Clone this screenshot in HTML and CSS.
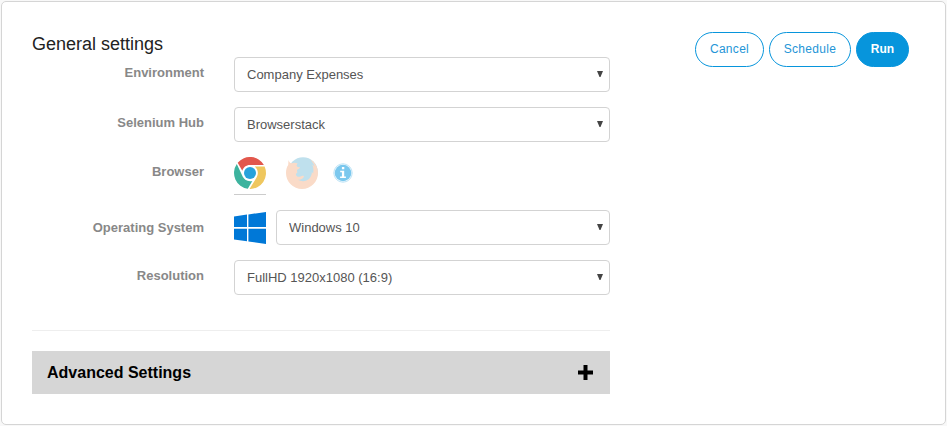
FILE: index.html
```html
<!DOCTYPE html>
<html lang="en">
<head>
<meta charset="utf-8">
<title>General settings</title>
<link rel="stylesheet" href="styles.css">
</head>
<body>
<main class="card">
  <section class="settings">
    <h1 class="title">General settings</h1>
    <div class="form">
      <div class="row">
        <label class="label" for="env">Environment</label>
        <div class="select"><select id="env"><option>Company Expenses</option></select><svg class="arrow" viewBox="0 0 6 6"><path d="M0 0h6L3.500 6h-1z"/></svg></div>
      </div>
      <div class="row">
        <label class="label" for="hub">Selenium Hub</label>
        <div class="select"><select id="hub"><option>Browserstack</option></select><svg class="arrow" viewBox="0 0 6 6"><path d="M0 0h6L3.500 6h-1z"/></svg></div>
      </div>
      <div class="row browser-row">
        <span class="label">Browser</span>
        <div class="browsers">
          <span class="browser selected">
            <svg width="32" height="32" viewBox="0 0 32 32">
              <circle cx="16" cy="16" r="16" fill="#fff"/>
              <path d="M3.700 5.800A16 16 0 0 1 29.900 8H16c-4 0-6.700 2.400-7.700 5.700z" fill="#e2574c"/>
              <path d="M2.800 7A16 16 0 0 0 13.800 31.850L18.300 24C13.600 25 9.800 22.600 8.200 18.500z" fill="#3db39e"/>
              <path d="M30.600 9.500A16 16 0 0 1 15.500 32L22.700 20.300C24.800 16.700 24 12.500 20.800 9.500z" fill="#efc75e"/>
              <circle cx="16" cy="16" r="6" fill="#27a2db"/>
            </svg>
          </span>
          <span class="browser firefox">
            <svg width="32" height="32" viewBox="0 0 32 32">
              <circle cx="17" cy="15" r="14.800" fill="#bfe0ed"/>
              <path d="M2.500 3C3 5 4 6 5.500 6.300c2-.8 4-.8 6 0L10.500 8.500c.5 1.500 2 1.600 3.700 1.800-.3 1.300-2 1.700-3.200 2.700l.3 2.700c-1.500.6-1.800 2.100-.7 3.300 1.800 1.600 4 .6 5.800-.2 1-.4 2 .2 1.300 1.400-1.500 2-3.500 2.600-6 2.600 7 3.500 14-.2 14.200-7.800l1.200 1.500c.7-3.300.4-6.300-1-9l2.500 2C27.500 6.500 26 4 23.800 2 29 5 32 10 32 16a16 16 0 0 1-32 0C0 12.500.8 10 2.200 8z" fill="#fadbc8"/>
            </svg>
          </span>
          <svg class="info" width="20" height="20" viewBox="0 0 20 20">
            <circle cx="10" cy="10" r="9.200" fill="#fff" stroke="#a9daf3" stroke-width=".8"/>
            <circle cx="10" cy="10" r="8.300" fill="#7bc8ee"/>
            <path d="M8.900 4h2.400v2.200H8.900zM7.200 7.800h4v5.800h1.700V15H7.100v-1.400h1.800V9.200H7.200z" fill="#fff"/>
          </svg>
        </div>
      </div>
      <div class="row os-row">
        <label class="label" for="os">Operating System</label>
        <svg class="windows" width="32" height="32" viewBox="0 0 32 32" fill="#0078d7"><path d="M0 4.500L13 2.600V15H0zM14.400 2.400L32 0v15H14.400zM0 16.700h13v12.600L0 27.400zM14.400 16.700H32V32l-17.600-2.500z"/></svg>
        <div class="select"><select id="os"><option>Windows 10</option></select><svg class="arrow" viewBox="0 0 6 6"><path d="M0 0h6L3.500 6h-1z"/></svg></div>
      </div>
      <div class="row resolution-row">
        <label class="label" for="res">Resolution</label>
        <div class="select"><select id="res"><option>FullHD 1920x1080 (16:9)</option></select><svg class="arrow" viewBox="0 0 6 6"><path d="M0 0h6L3.500 6h-1z"/></svg></div>
      </div>
    </div>
    <hr class="divider">
    <div class="advanced">
      <h2 class="advanced-title">Advanced Settings</h2>
      <svg width="15" height="15" viewBox="0 0 15 15"><path d="M5.500 0h4v5.500H15v4H9.500V15h-4V9.500H0v-4h5.500z"/></svg>
    </div>
  </section>
  <div class="actions">
    <button class="btn cancel">Cancel</button>
    <button class="btn schedule">Schedule</button>
    <button class="btn run">Run</button>
  </div>
</main>
</body>
</html>
```

FILE: styles.css
```css
* { box-sizing: border-box; }
body {
  margin: 0;
  padding: 1px;
  background: #f8f8f8;
  font-family: "Liberation Sans", Arial, sans-serif;
  font-size: 13px;
}
.card {
  display: flex;
  justify-content: space-between;
  align-items: flex-start;
  height: 424px;
  padding: 30px 36px 0 30px;
  border: 1px solid #d5d5d5;
  border-radius: 5px;
  background: #fff;
}
.settings { width: 578px; }
.title {
  height: 25px;
  margin: 0;
  color: #222;
  font-size: 18px;
  font-weight: 400;
  line-height: 24px;
}
.form { display: grid; gap: 15px; }
.row { display: flex; height: 35px; }
.browser-row { height: 38px; }
.label {
  width: 172px;
  margin-right: 30px;
  padding-top: 8px;
  color: #888;
  font-weight: 700;
  line-height: 15px;
  text-align: right;
}
.browser-row .label { padding-top: 7px; }
.os-row .label { padding-top: 10px; }
.select {
  position: relative;
  flex: 1;
}
select {
  display: block;
  width: 100%;
  height: 35px;
  padding: 0 12px;
  appearance: none;
  border: 1px solid #d3d3d3;
  border-radius: 4px;
  background: #fff;
  color: #555;
  font: inherit;
}
.arrow {
  position: absolute;
  top: 14px;
  right: 7px;
  width: 6px;
  height: 6px;
  fill: #444;
}
.browsers { display: flex; align-items: flex-start; }
.browser { height: 38px; margin-right: 20px; }
.browser svg { display: block; }
.selected { border-bottom: 1px solid #ccc; }
.firefox { margin-right: 15px; }
.info { margin-top: 6px; }
.windows { margin: 2px 10px 0 0; }
.divider {
  height: 1px;
  margin: 35px 0 20px;
  border: 0;
  background: #eee;
}
.advanced {
  display: flex;
  align-items: center;
  justify-content: space-between;
  height: 43px;
  padding: 0 17px 0 15px;
  background: #d6d6d6;
}
.advanced-title {
  margin: 0;
  font-size: 16px;
}
.actions { display: flex; gap: 5px; }
.btn {
  height: 35px;
  padding: 0 0 2px;
  border: 1px solid #0795dc;
  border-radius: 18px;
  background: #fff;
  color: #2495d7;
  font: 12px "Liberation Sans", Arial, sans-serif;
  letter-spacing: .3px;
}
.cancel { width: 69px; }
.schedule { width: 82px; }
.run {
  width: 53px;
  background: #0795dc;
  color: #fff;
  font-weight: 700;
  letter-spacing: 0;
}
```
